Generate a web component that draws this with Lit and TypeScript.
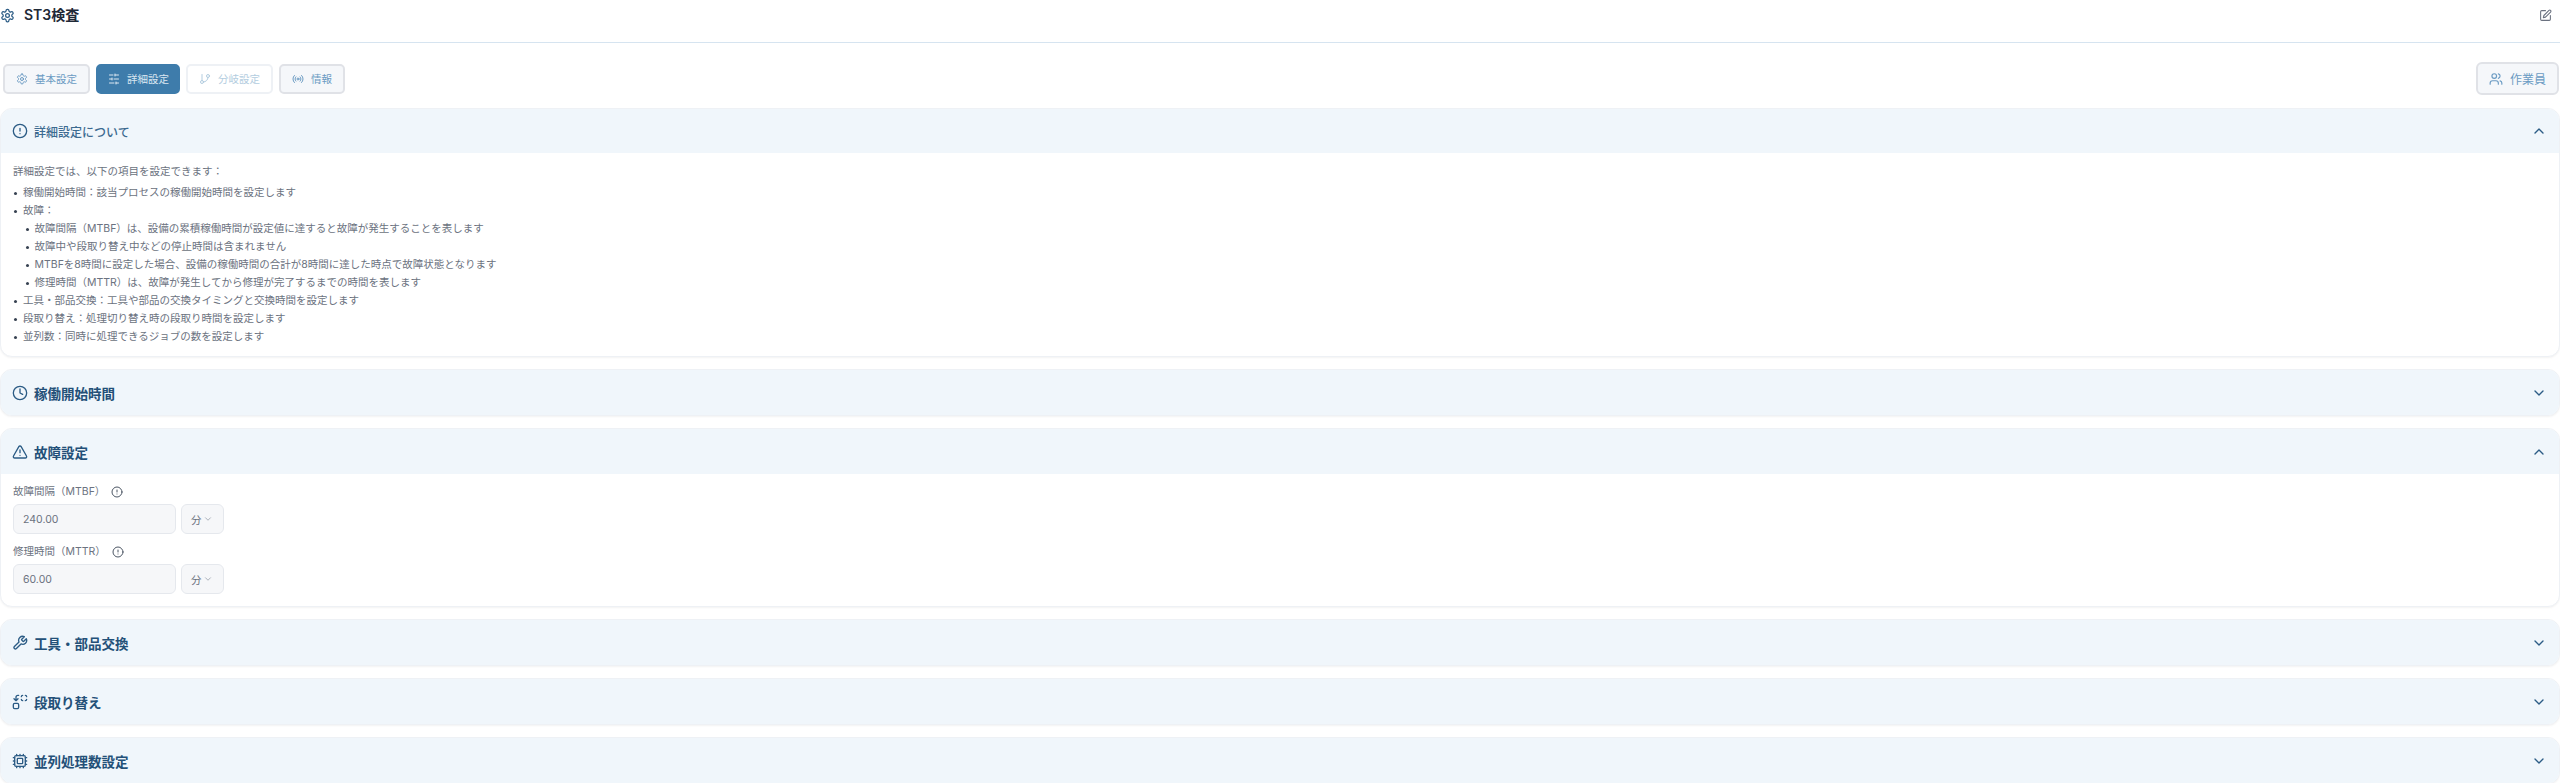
import { LitElement, html, css, svg } from "lit";
import { customElement } from "lit/decorators.js";

const ic = (body: unknown, cls = "") =>
  html`<svg class="ic ${cls}" viewBox="0 0 24 24" fill="none" stroke="currentColor" stroke-width="2" stroke-linecap="round" stroke-linejoin="round">${body}</svg>`;

const gear = svg`<path d="M12.22 2h-.44a2 2 0 0 0-2 2v.18a2 2 0 0 1-1 1.73l-.43.25a2 2 0 0 1-2 0l-.15-.08a2 2 0 0 0-2.73.73l-.22.38a2 2 0 0 0 .73 2.73l.15.1a2 2 0 0 1 1 1.72v.51a2 2 0 0 1-1 1.74l-.15.09a2 2 0 0 0-.73 2.73l.22.38a2 2 0 0 0 2.73.73l.15-.08a2 2 0 0 1 2 0l.43.25a2 2 0 0 1 1 1.73V20a2 2 0 0 0 2 2h.44a2 2 0 0 0 2-2v-.18a2 2 0 0 1 1-1.73l.43-.25a2 2 0 0 1 2 0l.15.08a2 2 0 0 0 2.73-.73l.22-.39a2 2 0 0 0-.73-2.73l-.15-.08a2 2 0 0 1-1-1.74v-.5a2 2 0 0 1 1-1.74l.15-.09a2 2 0 0 0 .73-2.73l-.22-.38a2 2 0 0 0-2.73-.73l-.15.08a2 2 0 0 1-2 0l-.43-.25a2 2 0 0 1-1-1.73V4a2 2 0 0 0-2-2z"/><circle cx="12" cy="12" r="3"/>`;
const sliders = svg`<path d="M21 4h-7M10 4H3M21 12h-9M8 12H3M21 20h-5M12 20H3M14 2v4M8 10v4M16 18v4"/>`;
const branch = svg`<path d="M6 3v12"/><circle cx="18" cy="6" r="3"/><circle cx="6" cy="18" r="3"/><path d="M18 9a9 9 0 0 1-9 9"/>`;
const radio = svg`<path d="M4.9 19.1C1 15.2 1 8.8 4.9 4.9M7.8 16.2c-2.3-2.3-2.3-6.1 0-8.5"/><circle cx="12" cy="12" r="2"/><path d="M16.2 7.8c2.3 2.3 2.3 6.1 0 8.5M19.1 4.9C23 8.8 23 15.1 19.1 19"/>`;
const users = svg`<path d="M16 21v-2a4 4 0 0 0-4-4H6a4 4 0 0 0-4 4v2"/><circle cx="9" cy="7" r="4"/><path d="M22 21v-2a4 4 0 0 0-3-3.87M16 3.13a4 4 0 0 1 0 7.75"/>`;
const pen = svg`<path d="M12 3H5a2 2 0 0 0-2 2v14a2 2 0 0 0 2 2h14a2 2 0 0 0 2-2v-7"/><path d="M18.4 2.6a2.1 2.1 0 0 1 3 3L12 15l-4 1 1-4z"/>`;
const alert = svg`<circle cx="12" cy="12" r="10"/><path d="M12 8v4M12 16h.01"/>`;
const clock = svg`<circle cx="12" cy="12" r="10"/><path d="M12 6v6l4 2"/>`;
const tri = svg`<path d="m21.73 18-8-14a2 2 0 0 0-3.48 0l-8 14A2 2 0 0 0 4 21h16a2 2 0 0 0 1.73-3"/><path d="M12 9v4M12 17h.01"/>`;
const wrench = svg`<path d="M14.7 6.3a1 1 0 0 0 0 1.4l1.6 1.6a1 1 0 0 0 1.4 0l3.77-3.77a6 6 0 0 1-7.94 7.94l-6.91 6.91a2.12 2.12 0 0 1-3-3l6.91-6.91a6 6 0 0 1 7.94-7.94l-3.76 3.76z"/>`;
const replace = svg`<path d="M14 4a2 2 0 0 1 2-2M16 10a2 2 0 0 1-2-2M20 2a2 2 0 0 1 2 2M22 8a2 2 0 0 1-2 2M3 7l3 3 3-3M6 10V5a3 3 0 0 1 3-3h1"/><rect x="2" y="14" width="8" height="8" rx="2"/>`;
const cpu = svg`<path d="M12 20v2M12 2v2M17 20v2M17 2v2M2 12h2M2 17h2M2 7h2M20 12h2M20 17h2M20 7h2M7 20v2M7 2v2"/><rect x="4" y="4" width="16" height="16" rx="2"/><rect x="8" y="8" width="8" height="8" rx="1"/>`;
const up = svg`<path d="m6 15 6-6 6 6"/>`;
const down = svg`<path d="m6 9 6 6 6-6"/>`;

@customElement("app-root")
export class AppRoot extends LitElement {
  static styles = css`
    :host {
      display: block;
      background: #fff;
      color: #4b5563;
      font-family: Inter, "Noto Sans CJK JP", "Noto Sans", sans-serif;
      height: 783px;
      overflow: hidden;
    }
    .ic { width: 14px; height: 14px; flex: none; display: block; }
    .top {
      height: 43px;
      box-sizing: border-box;
      border-bottom: 1px solid #d6e4f0;
      display: flex;
      align-items: center;
      padding: 0 8px 12px 0;
      color: #2c5c85;
    }
    .top > .ic:first-child { width: 15px; height: 15px; }
    .top h1 {
      margin: -2px 0 0 9px;
      font-size: 14px;
      font-weight: 600;
      color: #1f2937;
      flex: 1;
    }
    .top .edit { color: #6b7280; width: 13px; height: 13px; }
    .bar {
      display: flex;
      align-items: center;
      justify-content: space-between;
      padding: 19px 1px 13px 3px;
    }
    .tabs { display: flex; gap: 6px; }
    .tab {
      height: 30px;
      box-sizing: border-box;
      border: 2px solid #e0e2e7;
      border-radius: 5px;
      background: #f5f7fa;
      color: #6b9bc3;
      display: flex;
      align-items: center;
      gap: 7px;
      padding: 0 11px;
      font-size: 10.5px;
    }
    .tab .ic { width: 12px; height: 12px; }
    .tab.active {
      background: #3e7cab;
      border-color: #3e7cab;
      color: #dbe7f1;
      padding: 0 9px 0 10px;
    }
    .tab.off { background: #fff; border-color: #eef1f5; color: #b3cde0; }
    .worker {
      height: 33px;
      width: 83px;
      box-sizing: border-box;
      border: 2px solid #e0e2e7;
      border-radius: 6px;
      background: #f5f7fa;
      color: #6b9bc3;
      display: flex;
      align-items: center;
      justify-content: center;
      gap: 7px;
      font-size: 12px;
    }
    .sections { display: flex; flex-direction: column; gap: 12px; }
    section {
      border: 1px solid #eef1f5;
      border-radius: 12px;
      overflow: hidden;
      background: #fff;
      box-shadow: 0 1px 2px rgba(0, 0, 0, 0.05);
    }
    .hd {
      height: 45px;
      box-sizing: border-box;
      background: #f0f6fb;
      display: flex;
      align-items: center;
      padding: 0 12px 0 11px;
      color: #2c5c85;
      gap: 6px;
    }
    .hd.small { height: 44px; }
    .hd .ic { width: 16px; height: 16px; }
    .hd .t { flex: 1; font-size: 13.5px; font-weight: 700; color: #235078; }
    .hd .t.light { font-size: 12px; font-weight: 500; color: #3c6a90; }
    .about {
      padding: 10px 12px 10px;
      font-size: 10.5px;
      line-height: 18px;
      color: #6b7280;
    }
    .about p { margin: 0 0 3px; }
    ul { margin: 0; padding: 0; list-style: none; }
    li { position: relative; padding-left: 10px; }
    li::before {
      content: "";
      position: absolute;
      left: 0.5px;
      top: 8px;
      width: 3px;
      height: 3px;
      border-radius: 50%;
      background: #374151;
    }
    li ul { margin-left: 1.5px; }
    li ul li::before { left: 1.5px; }
    .form { padding: 9px 12px 12px; }
    .lbl {
      display: flex;
      align-items: center;
      gap: 6px;
      font-size: 10.5px;
      line-height: 18px;
      color: #6b7280;
      margin-bottom: 3px;
    }
    .lbl .ic { width: 12px; height: 12px; color: #4b5563; }
    .row { display: flex; gap: 5px; margin-bottom: 9px; }
    .row:last-child { margin-bottom: 0; }
    .inp, .sel {
      height: 30px;
      box-sizing: border-box;
      background: #f6f7f9;
      border: 1px solid #e5e8ed;
      border-radius: 6px;
      display: flex;
      align-items: center;
      font-size: 10.5px;
      color: #6b7280;
    }
    .inp { width: 163px; padding-left: 9px; }
    .sel { width: 43px; padding-left: 9px; gap: 1px; }
    .sel .ic { width: 10px; height: 10px; color: #9ca3af; }
  `;

  private head(icon: unknown, title: string, open: boolean, light = false) {
    return html`<div class="hd ${light ? "small" : ""}">
      ${ic(icon)}
      <span class="t ${light ? "light" : ""}">${title}</span>
      ${ic(open ? up : down)}
    </div>`;
  }

  render() {
    return html`
      <div class="top">
        ${ic(gear)}
        <h1>ST3検査</h1>
        ${ic(pen, "edit")}
      </div>
      <div class="bar">
        <div class="tabs">
          <div class="tab">${ic(gear)}基本設定</div>
          <div class="tab active">${ic(sliders)}詳細設定</div>
          <div class="tab off">${ic(branch)}分岐設定</div>
          <div class="tab">${ic(radio)}情報</div>
        </div>
        <div class="worker">${ic(users)}作業員</div>
      </div>
      <div class="sections">
        <section>
          ${this.head(alert, "詳細設定について", true, true)}
          <div class="about">
            <p>詳細設定では、以下の項目を設定できます：</p>
            <ul>
              <li>稼働開始時間：該当プロセスの稼働開始時間を設定します</li>
              <li>
                故障：
                <ul>
                  <li>故障間隔（MTBF）は、設備の累積稼働時間が設定値に達すると故障が発生することを表します</li>
                  <li>故障中や段取り替え中などの停止時間は含まれません</li>
                  <li>MTBFを8時間に設定した場合、設備の稼働時間の合計が8時間に達した時点で故障状態となります</li>
                  <li>修理時間（MTTR）は、故障が発生してから修理が完了するまでの時間を表します</li>
                </ul>
              </li>
              <li>工具・部品交換：工具や部品の交換タイミングと交換時間を設定します</li>
              <li>段取り替え：処理切り替え時の段取り時間を設定します</li>
              <li>並列数：同時に処理できるジョブの数を設定します</li>
            </ul>
          </div>
        </section>
        <section>${this.head(clock, "稼働開始時間", false)}</section>
        <section>
          ${this.head(tri, "故障設定", true)}
          <div class="form">
            <div class="lbl">故障間隔（MTBF）${ic(alert)}</div>
            <div class="row">
              <div class="inp">240.00</div>
              <div class="sel">分${ic(down)}</div>
            </div>
            <div class="lbl">修理時間（MTTR）${ic(alert)}</div>
            <div class="row">
              <div class="inp">60.00</div>
              <div class="sel">分${ic(down)}</div>
            </div>
          </div>
        </section>
        <section>${this.head(wrench, "工具・部品交換", false)}</section>
        <section>${this.head(replace, "段取り替え", false)}</section>
        <section>${this.head(cpu, "並列処理数設定", false)}</section>
      </div>
    `;
  }
}
